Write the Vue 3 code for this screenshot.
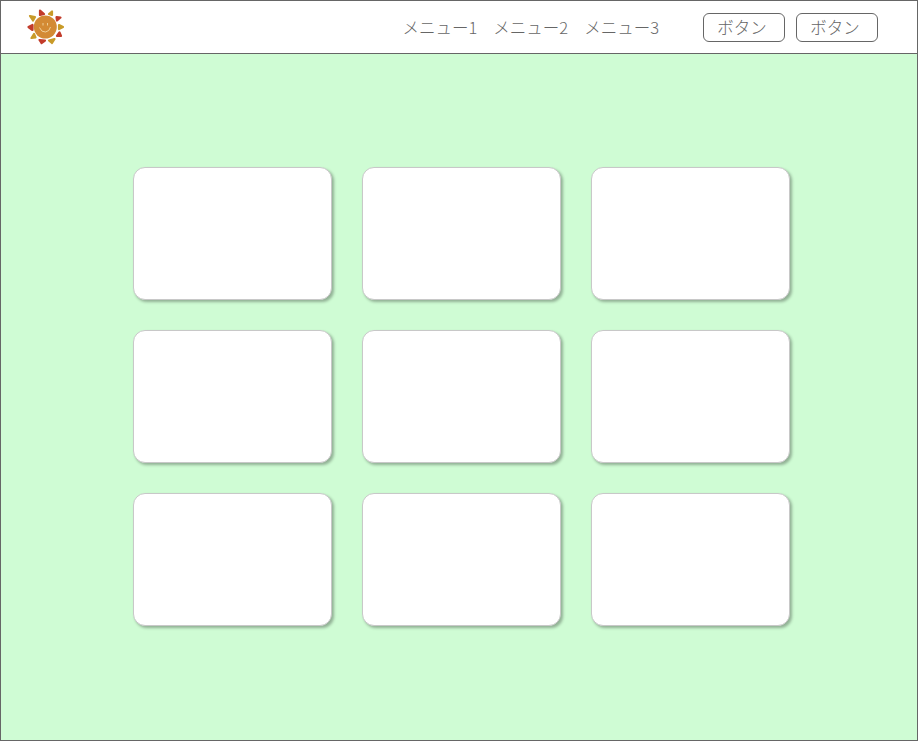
<template>
  <div class="page">
    <header class="header">
      <svg class="logo" width="38" height="38" viewBox="0 0 38 38">
        <circle cx="19.3" cy="19" r="11.5" fill="#d38a34" />
        <g fill="#c23b2a" stroke="#c23b2a" stroke-width="2.2" stroke-linejoin="round">
          <path d="M14 2.5 L18 6 L14 7 Z" />
          <path d="M30.5 9 L34.5 9.5 L31 12.5 Z" />
          <path d="M33.5 24.5 L35 28 L31 28 Z" />
          <path d="M13.5 32 L19 32.5 L15.5 35 Z" />
          <path d="M6.5 17 L6.5 22 L2.5 19 Z" />
        </g>
        <g fill="#c89a28" stroke="#c89a28" stroke-width="2.2" stroke-linejoin="round">
          <path d="M26 3.5 L26 7 L23 6 Z" />
          <path d="M33 17 L37 19 L33 21 Z" />
          <path d="M28.5 31 L26 35 L23 32.5 Z" />
          <path d="M8 26 L9.5 29.5 L5.5 30 Z" />
          <path d="M4 8 L9 9 L7 12.5 Z" />
        </g>
        <path d="M13.5 19.5 Q15.5 24.5 19.5 24 Q23.5 23.5 24.5 19" fill="none" stroke="#f5dfae" stroke-width="0.8" />
        <path d="M17 15 v2.5 M21.5 15 v2.5" stroke="#f5dfae" stroke-width="0.8" />
      </svg>
      <nav class="menu">
        <a v-for="m in menus" :key="m" class="menu-item">{{ m }}</a>
      </nav>
      <div class="buttons">
        <button class="btn">ボタン</button>
        <button class="btn">ボタン</button>
      </div>
    </header>
    <main class="main">
      <div class="grid">
        <div v-for="n in 9" :key="n" class="card"></div>
      </div>
    </main>
  </div>
</template>

<script setup>
const menus = ["メニュー1", "メニュー2", "メニュー3"];
</script>

<style>
html,
body {
  margin: 0;
  padding: 0;
}
</style>

<style scoped>
.page {
  box-sizing: border-box;
  width: 918px;
  height: 741px;
  border: 1px solid #666;
  display: flex;
  flex-direction: column;
  font-family: "Noto Sans CJK JP", "Noto Sans", sans-serif;
  font-weight: 300;
  color: #666;
}

.header {
  box-sizing: border-box;
  height: 53px;
  flex-shrink: 0;
  border-bottom: 1px solid #666;
  background: #fff;
  display: flex;
  align-items: center;
  padding: 0 39px 0 25px;
}

.logo {
  display: block;
}

.menu {
  display: flex;
  gap: 16px;
  margin-left: auto;
  font-size: 16.5px;
}

.buttons {
  display: flex;
  gap: 11px;
  margin-left: 44px;
}

.btn {
  box-sizing: border-box;
  width: 82px;
  height: 29px;
  border: 1px solid #666;
  border-radius: 6px;
  background: #fff;
  color: #666;
  font-family: inherit;
  font-weight: inherit;
  font-size: 16.5px;
  padding: 0 4px 0 0;
}

.main {
  flex: 1;
  background: #cffcd4;
  padding: 113px 0 0 132px;
}

.grid {
  display: grid;
  grid-template-columns: repeat(3, 199px);
  grid-auto-rows: 133px;
  gap: 30px;
}

.card {
  box-sizing: border-box;
  background: #fff;
  border: 1px solid #c8c8c8;
  border-radius: 12px;
  box-shadow: 2px 2px 3px rgba(0, 0, 0, 0.3);
}
</style>
